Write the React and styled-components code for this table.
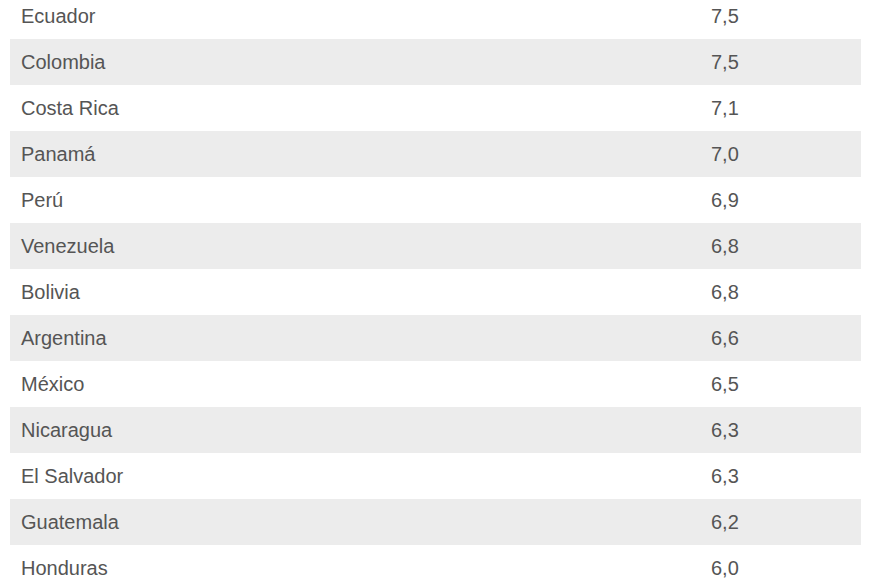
import React from "react";
import styled, { createGlobalStyle } from "styled-components";

const GlobalStyle = createGlobalStyle`
  html, body {
    margin: 0;
    padding: 0;
    background: #fff;
    overflow: hidden;
  }
`;

const Page = styled.div`
  padding: 0 9px 0 10px;
  margin-top: -7px;
  font-family: "Liberation Sans", Arial, sans-serif;
`;

const Table = styled.table`
  width: 100%;
  border-collapse: collapse;
`;

const Row = styled.tr`
  height: 46px;
  background: ${(p) => (p.$striped ? "#ececec" : "#fff")};
`;

const Cell = styled.td`
  padding: 0 11px;
  font-size: 20px;
  color: #555;
  vertical-align: middle;
  width: ${(p) => (p.$first ? "668px" : "auto")};
`;

const data = [
  ["Ecuador", "7,5"],
  ["Colombia", "7,5"],
  ["Costa Rica", "7,1"],
  ["Panamá", "7,0"],
  ["Perú", "6,9"],
  ["Venezuela", "6,8"],
  ["Bolivia", "6,8"],
  ["Argentina", "6,6"],
  ["México", "6,5"],
  ["Nicaragua", "6,3"],
  ["El Salvador", "6,3"],
  ["Guatemala", "6,2"],
  ["Honduras", "6,0"],
];

const App = () => {
  return (
    <Page>
      <GlobalStyle />
      <Table>
        <tbody>
          {data.map(([country, value], i) => (
            <Row key={country} $striped={i % 2 === 1}>
              <Cell $first>{country}</Cell>
              <Cell>{value}</Cell>
            </Row>
          ))}
        </tbody>
      </Table>
    </Page>
  );
};

export default App;
